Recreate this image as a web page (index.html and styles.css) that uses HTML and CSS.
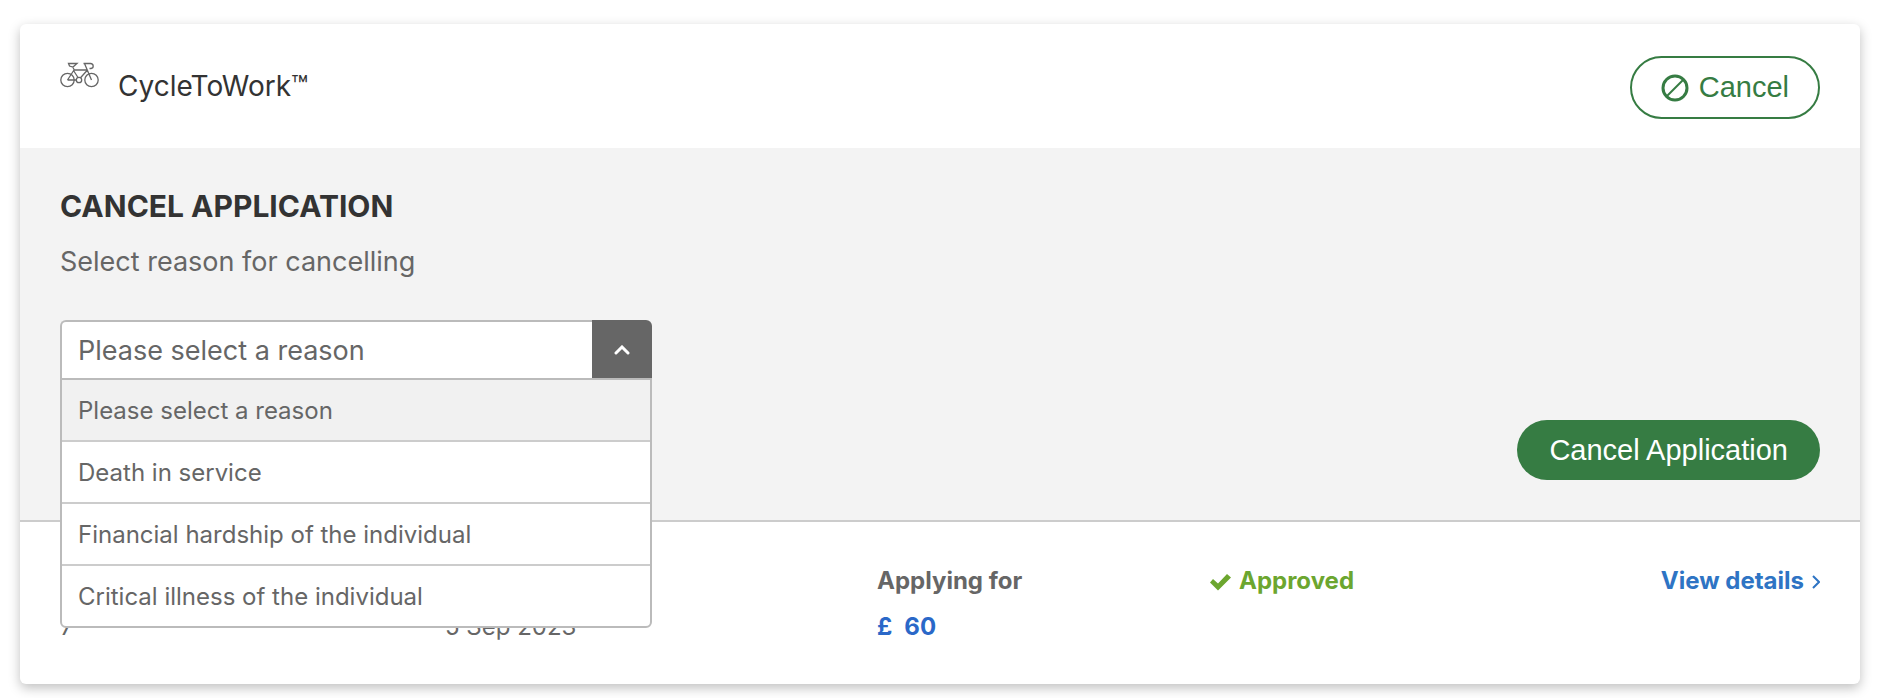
FILE: index.html
```html
<!DOCTYPE html>
<html lang="en">
<head>
    <meta charset="UTF-8">
    <meta name="viewport" content="width=device-width, initial-scale=1.0">
    <title>CycleToWork</title>
    <link rel="stylesheet" href="styles.css">
</head>
<body>
    <div class="card">
        <div class="card-header">
            <div class="benefit">
                <svg class="bike" viewBox="0 0 40 26" width="40" height="26">
                    <circle cx="7.5" cy="18" r="6.700"/>
                    <circle cx="31.5" cy="18" r="6.700"/>
                    <circle cx="19" cy="18" r="2.700"/>
                    <path d="M7.500 18h8.800M7.500 18L14 8M13.500 8.500L18 15.500M14 8h13.500M20.500 15.800L27.500 8M31.500 18L24.500 1.500M8.500 1.500h8.500l-4 3.500-3.500-1zM12.500 4.500l2 4M23.500 1.500h7c3.500.3 3.500 4.500.500 5h-1.500"/>
                </svg>
                <h2>CycleToWork™</h2>
            </div>
            <button class="btn btn-outline">
                <svg viewBox="0 0 28 28" width="28" height="28">
                    <circle cx="14" cy="14" r="12" stroke-width="3"/>
                    <path d="M6 22L22 6" stroke-width="2"/>
                </svg>
                Cancel
            </button>
        </div>

        <form class="cancel-panel">
            <div class="reason">
                <h3>CANCEL APPLICATION</h3>
                <label for="reason">Select reason for cancelling</label>
                <div class="dropdown">
                    <select id="reason">
                        <option>Please select a reason</option>
                        <option>Death in service</option>
                        <option>Financial hardship of the individual</option>
                        <option>Critical illness of the individual</option>
                    </select>
                    <span class="toggle">
                        <svg viewBox="0 0 16 10" width="16" height="10"><path d="M2 8l6-6 6 6"/></svg>
                    </span>
                    <ul class="options" role="listbox">
                        <li role="option" class="selected" aria-selected="true">Please select a reason</li>
                        <li role="option">Death in service</li>
                        <li role="option">Financial hardship of the individual</li>
                        <li role="option">Critical illness of the individual</li>
                    </ul>
                </div>
            </div>
            <button type="button" class="btn btn-primary">Cancel Application</button>
        </form>

        <div class="summary">
            <div class="col col-value">7</div>
            <div class="col col-value">5 Sep 2023</div>
            <div class="col">
                <strong>Applying for</strong>
                <strong class="amount"><span>£</span> <span>60</span></strong>
            </div>
            <div class="col status">
                <svg viewBox="0 0 22 18" width="22" height="18"><path d="M1 9.500L4 6l5 4.500L18 1l4 3.500L9 17.500z"/></svg>
                <strong>Approved</strong>
            </div>
            <a class="details" href="#">
                View details
                <svg viewBox="0 0 8 14" width="8" height="14"><path d="M1 1l6 6-6 6"/></svg>
            </a>
        </div>
    </div>
</body>
</html>
```
FILE: styles.css
```css
* {
    box-sizing: border-box;
}
body {
    margin: 0;
    padding: 24px 24px 14px 20px;
    font-family: Inter, "Liberation Sans", sans-serif;
    font-size: 24px;
    line-height: 30px;
    color: #666;
    background: #fff;
}
h2,
h3,
ul {
    margin: 0;
    padding: 0;
}
svg {
    flex: none;
    fill: none;
    stroke: currentColor;
}
.card {
    border-radius: 6px;
    background: #fff;
    box-shadow: 0 4px 12px rgba(0, 0, 0, 0.25);
}
.card-header {
    display: flex;
    justify-content: space-between;
    align-items: flex-start;
    padding: 32px 40px 29px;
}
.benefit {
    display: flex;
    gap: 18px;
    padding-top: 6px;
}
.bike {
    color: #666;
    stroke-width: 1.3;
}
h2 {
    padding-top: 8px;
    font-size: 28px;
    font-weight: 400;
    line-height: 32px;
    color: #333;
}
.btn {
    display: flex;
    align-items: center;
    gap: 10px;
    height: 60px;
    padding: 0 32px;
    border: none;
    border-radius: 32px;
    font-family: "Liberation Sans", Arial, sans-serif;
    font-size: 29px;
    cursor: pointer;
}
.btn-outline {
    height: 63px;
    padding: 0 29px;
    border: 2px solid #367c43;
    color: #367c43;
    background: #fff;
}
.btn-primary {
    color: #fff;
    background: #367c43;
}
.cancel-panel {
    display: flex;
    justify-content: space-between;
    align-items: flex-end;
    padding: 40px;
    border-bottom: 2px solid #ccc;
    background: #f3f3f3;
}
.reason {
    flex: 0 0 592px;
    padding-bottom: 100px;
}
h3 {
    margin-bottom: 20px;
    font-size: 30px;
    font-weight: 700;
    line-height: 36px;
    color: #333;
}
label {
    display: block;
    margin-bottom: 40px;
    font-size: 27px;
    line-height: 36px;
}
.dropdown {
    position: relative;
    display: flex;
    height: 60px;
}
select {
    flex: 1;
    padding: 0 16px;
    border: 2px solid #bbb;
    border-right: none;
    border-radius: 6px 0 0 0;
    font-family: inherit;
    font-size: 27px;
    color: #666;
    background: #fff;
    appearance: none;
}
.toggle {
    display: flex;
    align-items: center;
    justify-content: center;
    width: 60px;
    border-radius: 0 6px 0 0;
    color: #fff;
    background: #666;
    pointer-events: none;
}
.toggle path {
    stroke-width: 3;
    stroke-linecap: round;
}
.options {
    position: absolute;
    top: 58px;
    left: 0;
    right: 0;
    border: 2px solid #bbb;
    border-radius: 0 0 6px 6px;
    overflow: hidden;
    list-style: none;
    background: #fff;
}
.options li {
    padding: 16px 16px 14px;
}
.options li + li {
    border-top: 2px solid #ccc;
}
.options .selected {
    background: #f1f1f1;
}
.summary {
    display: grid;
    grid-template-columns: 385fr 432fr 332fr 300fr 311fr;
    padding: 44px 40px 42px;
}
.col {
    display: flex;
    flex-direction: column;
    gap: 16px;
}
.col-value {
    justify-content: flex-end;
}
.amount {
    display: flex;
    gap: 12px;
    color: #2a68c8;
}
.status {
    flex-direction: row;
    gap: 8px;
    color: #6ca62f;
}
.status svg {
    margin-top: 7px;
    fill: currentColor;
    stroke: none;
}
.details {
    display: flex;
    justify-content: flex-end;
    gap: 8px;
    font-weight: 700;
    color: #2e74c4;
    text-decoration: none;
}
.details svg {
    margin-top: 9px;
    stroke-width: 2;
}
```
